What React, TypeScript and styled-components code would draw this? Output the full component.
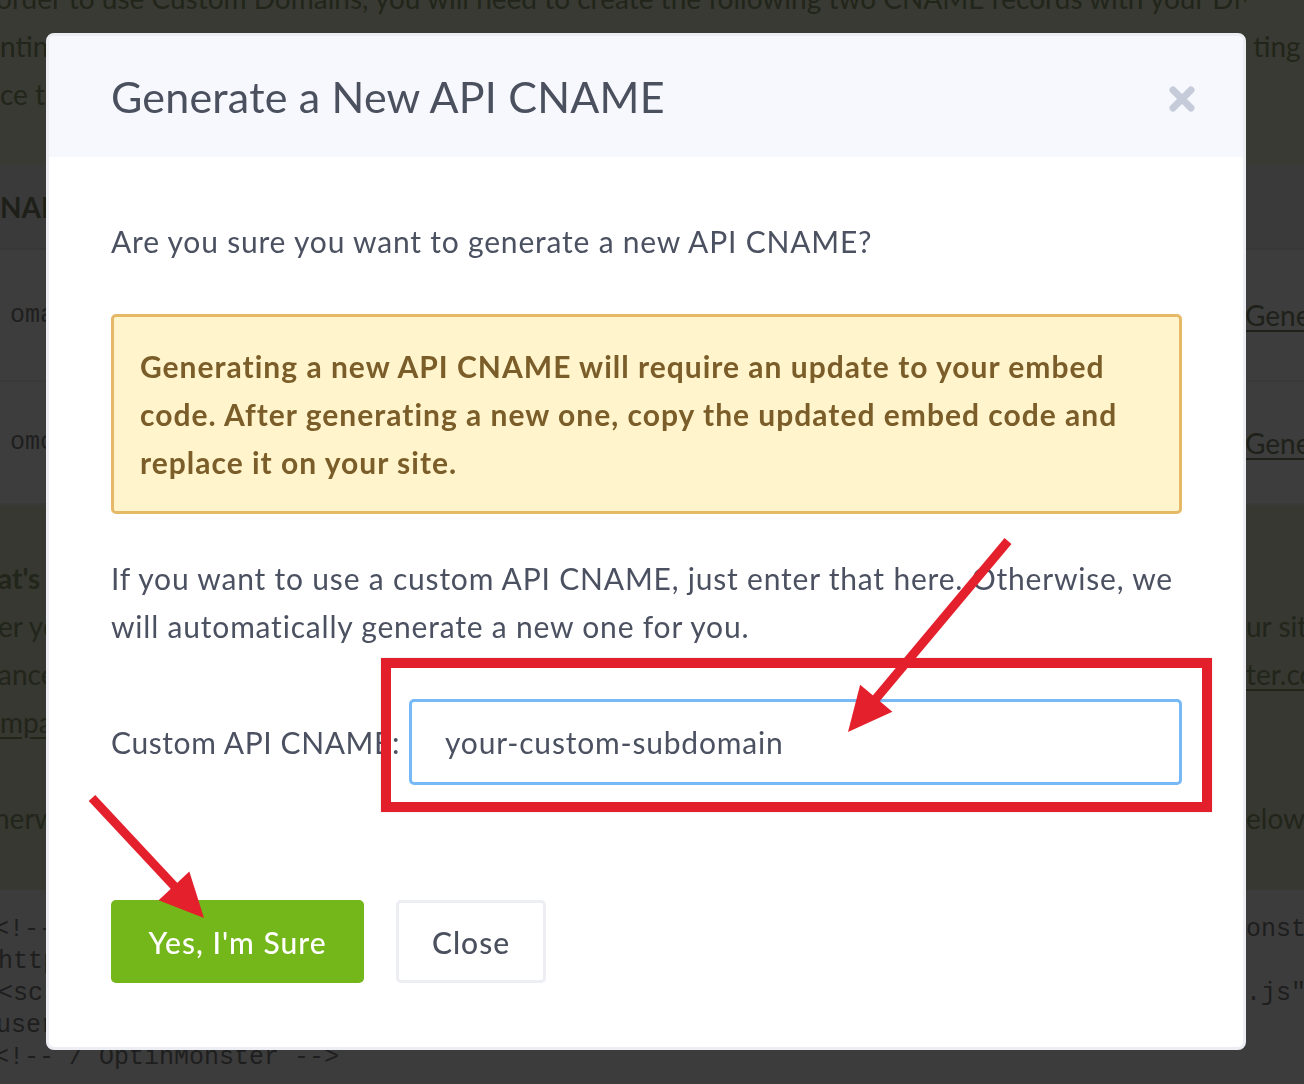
import React from "react";
import styled, { createGlobalStyle } from "styled-components";

const GlobalStyle = createGlobalStyle`
  html, body { margin: 0; padding: 0; }
  body {
    width: 1304px;
    height: 1084px;
    overflow: hidden;
    background: #e0e8cc;
    font-family: Lato, "Open Sans", "Liberation Sans", sans-serif;
  }
  * { box-sizing: border-box; }
`;

/* ---------- page behind the modal ---------- */

const Page = styled.div`
  margin-top: -26px;
  width: 1304px;
  overflow: hidden;
  font-size: 28px;
  color: #86926a;
`;

const Section = styled.section<{ $bg: string; $pt: number; $pb: number }>`
  background: ${(p) => p.$bg};
  padding: ${(p) => p.$pt}px 0 ${(p) => p.$pb}px;
`;

const Line = styled.div<{ $bold?: boolean; $mono?: boolean; $h?: number }>`
  display: grid;
  grid-template-columns: 1246px max-content;
  height: ${(p) => p.$h ?? 48}px;
  line-height: ${(p) => p.$h ?? 48}px;
  white-space: nowrap;
  font-weight: ${(p) => (p.$bold ? 700 : 400)};
  font-family: ${(p) =>
    p.$mono ? `"Liberation Mono", "DejaVu Sans Mono", monospace` : "inherit"};
  font-size: ${(p) => (p.$mono ? "25px" : "28px")};
  color: ${(p) => (p.$mono ? "#7a7a7a" : "inherit")};
`;

const Left = styled.span<{ $shift?: number; $link?: boolean }>`
  display: block;
  overflow: hidden;
  margin-left: ${(p) => -(p.$shift ?? 0)}px;
  text-decoration: ${(p) => (p.$link ? "underline" : "none")};
  text-underline-offset: 4px;
`;

const Right = styled.span<{ $link?: boolean }>`
  text-decoration: ${(p) => (p.$link ? "underline" : "none")};
  text-underline-offset: 4px;
`;

const Table = styled.div`
  background: #f3f3f3;
`;

const TableHead = styled.div`
  height: 85px;
  background: #e6e6e6;
  display: flex;
  align-items: center;
  font-weight: 700;
  font-size: 28px;
  color: #737d61;
  border-bottom: 2px solid #dadada;
`;

const TableRow = styled.div<{ $h: number }>`
  display: grid;
  grid-template-columns: 1245px max-content;
  align-items: center;
  height: ${(p) => p.$h}px;
  border-bottom: 2px solid #e2e2e2;
  white-space: nowrap;
`;

const MonoCell = styled.span`
  padding-left: 10px;
  font-family: "Liberation Mono", "DejaVu Sans Mono", monospace;
  font-size: 25px;
  color: #7c7c7c;
`;

const LinkCell = styled.span`
  font-size: 28px;
  color: #7a8464;
  text-decoration: underline;
  text-underline-offset: 4px;
`;

/* ---------- modal ---------- */

const Backdrop = styled.div`
  position: fixed;
  inset: 0;
  background: rgba(0, 0, 0, 0.75);
  display: flex;
  align-items: flex-start;
  justify-content: flex-start;
  padding: 33px 0 0 46px;
`;

const Modal = styled.div`
  position: relative;
  width: 1200px;
  background: #ffffff;
  border: 3px solid #eceef4;
  border-radius: 8px;
  overflow: hidden;
  color: #4b5060;
`;

const Header = styled.header`
  height: 121px;
  background: #f7f8fd;
  display: flex;
  align-items: center;
  justify-content: space-between;
  padding: 0 47px 0 62px;
`;

const Title = styled.h2`
  margin: 0;
  font-size: 43px;
  font-weight: 400;
  color: #4a505e;
  letter-spacing: 0.2px;
`;

const CloseX = styled.button`
  border: 0;
  background: transparent;
  padding: 0;
  margin-top: 4px;
  width: 28px;
  height: 28px;
  display: flex;
  cursor: pointer;
`;

const Body = styled.div`
  padding: 60px 61px 64px 62px;
`;

const Text = styled.p<{ $mt?: number }>`
  margin: ${(p) => p.$mt ?? 0}px 0 0;
  font-size: 30px;
  line-height: 48px;
  letter-spacing: 0.8px;
  color: #4b5161;
  white-space: nowrap;
`;

const Warning = styled.div`
  margin-top: 49px;
  border: 3px solid #e5b968;
  border-radius: 5px;
  background: #fff4cb;
  padding: 25px 26px;
  font-size: 30px;
  line-height: 48px;
  letter-spacing: 1px;
  font-weight: 700;
  color: #7a5d29;
  white-space: nowrap;
`;

const FormRow = styled.div`
  margin-top: 49px;
  display: flex;
  align-items: center;
  justify-content: space-between;
`;

const Label = styled.label`
  font-size: 30px;
  letter-spacing: 0.6px;
  color: #4b5161;
  white-space: nowrap;
`;

const Input = styled.input`
  flex: 0 0 773px;
  height: 86px;
  border: 3px solid #77b9f7;
  border-radius: 5px;
  padding: 0 33px;
  font-family: inherit;
  font-size: 30px;
  letter-spacing: 0.8px;
  color: #4b5161;
  outline: none;
  background: #fff;
`;

const Actions = styled.div`
  margin-top: 115px;
  display: flex;
  gap: 32px;
`;

const Button = styled.button<{ $primary?: boolean; $w: number }>`
  width: ${(p) => p.$w}px;
  height: 83px;
  border-radius: 5px;
  font-family: inherit;
  font-size: 30px;
  letter-spacing: 1px;
  font-weight: 500;
  cursor: pointer;
  background: ${(p) => (p.$primary ? "#74b71b" : "#ffffff")};
  color: ${(p) => (p.$primary ? "#ffffff" : "#4a505e")};
  border: ${(p) => (p.$primary ? "0" : "3px solid #edeef3")};
`;

/* ---------- annotations (drawn over the modal) ---------- */

const Annotations = styled.div`
  position: absolute;
  inset: 0;
  pointer-events: none;
`;

const RedBox = styled.div`
  position: absolute;
  left: 332px;
  top: 622px;
  width: 831px;
  height: 154px;
  border: 10px solid #e31f2b;
  box-shadow: 0 0 2px rgba(0, 0, 0, 0.15);
`;

const ArrowLayer = styled.svg`
  position: absolute;
  left: 0;
  top: 0;
`;

type ArrowProps = { x1: number; y1: number; x2: number; y2: number };

function Arrow({ x1, y1, x2, y2 }: ArrowProps) {
  const dx = x2 - x1;
  const dy = y2 - y1;
  const len = Math.hypot(dx, dy);
  const ux = dx / len;
  const uy = dy / len;
  const headLen = 44;
  const half = 21;
  const bx = x2 - ux * headLen;
  const by = y2 - uy * headLen;
  const nx = -uy;
  const ny = ux;
  const pts = `${x2},${y2} ${bx + nx * half},${by + ny * half} ${bx - nx * half},${by - ny * half}`;
  return (
    <g>
      <line
        x1={x1}
        y1={y1}
        x2={bx + ux * 4}
        y2={by + uy * 4}
        stroke="#e3202c"
        strokeWidth={9}
      />
      <polygon points={pts} fill="#e3202c" />
    </g>
  );
}

export default function App() {
  return (
    <>
      <GlobalStyle />
      <Page>
        <Section $bg="#e0e8cc" $pt={0} $pb={47}>
          <Line>
            <Left $shift={4}>
              order to use Custom Domains, you will need to create the following two CNAME records with your DNS
            </Left>
            <Right />
          </Line>
          <Line>
            <Left>ntinue</Left>
            <Right>&nbsp;ting</Right>
          </Line>
          <Line>
            <Left>ce the</Left>
            <Right />
          </Line>
        </Section>

        <Table>
          <TableHead>NAME</TableHead>
          <TableRow $h={132}>
            <MonoCell>omapi</MonoCell>
            <LinkCell>Generate</LinkCell>
          </TableRow>
          <TableRow $h={123}>
            <MonoCell>omcdn</MonoCell>
            <LinkCell>Generate</LinkCell>
          </TableRow>
        </Table>

        <Section $bg="#d8e0c4" $pt={49} $pb={48}>
          <Line $bold>
            <Left $shift={2}>at's</Left>
            <Right />
          </Line>
          <Line>
            <Left $shift={2}>er your</Left>
            <Right>ur site</Right>
          </Line>
          <Line>
            <Left $shift={2}>ance</Left>
            <Right $link>ter.com</Right>
          </Line>
          <Line>
            <Left $link>mpaigns</Left>
            <Right />
          </Line>
          <Line>
            <Left />
            <Right />
          </Line>
          <Line>
            <Left $shift={6}>herwise</Left>
            <Right>elow</Right>
          </Line>
        </Section>

        <Section $bg="#f0f0f0" $pt={24} $pb={40}>
          <Line $mono $h={32}>
            <Left $shift={6}>&lt;!--</Left>
            <Right>onster</Right>
          </Line>
          <Line $mono $h={32}>
            <Left $shift={2}>https:</Left>
            <Right />
          </Line>
          <Line $mono $h={32}>
            <Left $shift={2}>&lt;scri</Left>
            <Right>.js"</Right>
          </Line>
          <Line $mono $h={32}>
            <Left $shift={4}>user=</Left>
            <Right />
          </Line>
          <Line $mono $h={32}>
            <Left $shift={6}>&lt;!-- / OptinMonster --&gt;</Left>
            <Right />
          </Line>
        </Section>
      </Page>

      <Backdrop>
        <Modal>
          <Header>
            <Title>Generate a New API CNAME</Title>
            <CloseX aria-label="Close">
              <svg width="28" height="28" viewBox="0 0 28 28">
                <path
                  d="M5 5 L23 23 M23 5 L5 23"
                  stroke="#c6cbd9"
                  strokeWidth="7"
                  strokeLinecap="round"
                />
              </svg>
            </CloseX>
          </Header>
          <Body>
            <Text>Are you sure you want to generate a new API CNAME?</Text>
            <Warning>
              Generating a new API CNAME will require an update to your embed
              <br />
              code. After generating a new one, copy the updated embed code and
              <br />
              replace it on your site.
            </Warning>
            <Text $mt={40}>
              If you want to use a custom API CNAME, just enter that here. Otherwise, we
              <br />
              will automatically generate a new one for you.
            </Text>
            <FormRow>
              <Label htmlFor="cname">Custom API CNAME:</Label>
              <Input id="cname" defaultValue="your-custom-subdomain" />
            </FormRow>
            <Actions>
              <Button $primary $w={253}>Yes, I'm Sure</Button>
              <Button $w={150}>Close</Button>
            </Actions>
          </Body>
          <Annotations>
            <RedBox />
            <ArrowLayer width="1194" height="1015" viewBox="0 0 1194 1015">
              <Arrow x1={959} y1={505} x2={799} y2={696} />
              <Arrow x1={43} y1={762} x2={155} y2={882} />
            </ArrowLayer>
          </Annotations>
        </Modal>
      </Backdrop>
    </>
  );
}
